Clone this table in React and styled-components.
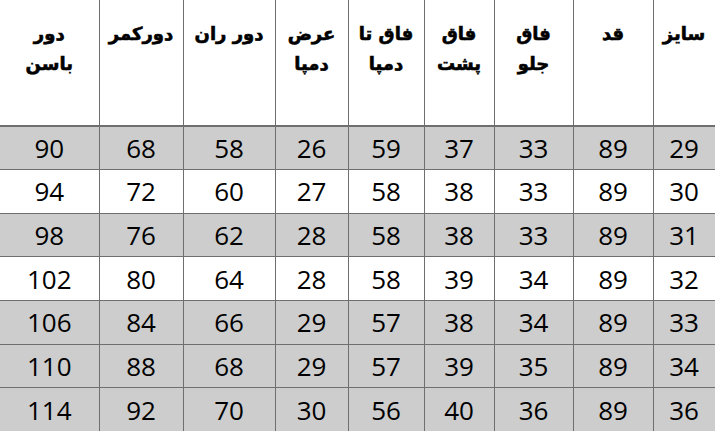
import React from "react";
import styled, { createGlobalStyle } from "styled-components";

const GlobalStyle = createGlobalStyle`
  html, body { margin: 0; padding: 0; background: #fff; }
  body { overflow: hidden; }
`;

// ستون‌ها از راست به چپ
const columns = [
  { title: ["سایز"], width: 62 },
  { title: ["قد"], width: 80 },
  { title: ["فاق", "جلو"], width: 79 },
  { title: ["فاق", "پشت"], width: 70 },
  { title: ["فاق تا", "دمپا"], width: 76 },
  { title: ["عرض", "دمپا"], width: 73 },
  { title: ["دور ران"], width: 92 },
  { title: ["دورکمر"], width: 84 },
  { title: ["دور", "باسن"], width: 99 },
];

const rows = [
  { shade: true, values: [29, 89, 33, 37, 59, 26, 58, 68, 90] },
  { shade: false, values: [30, 89, 33, 38, 58, 27, 60, 72, 94] },
  { shade: true, values: [31, 89, 33, 38, 58, 28, 62, 76, 98] },
  { shade: false, values: [32, 89, 34, 39, 58, 28, 64, 80, 102] },
  { shade: true, values: [33, 89, 34, 38, 57, 29, 66, 84, 106] },
  { shade: true, values: [34, 89, 35, 39, 57, 29, 68, 88, 110] },
  { shade: true, values: [36, 89, 36, 40, 56, 30, 70, 92, 114] },
];

export default function App() {
  return (
    <>
      <GlobalStyle />
      <Page>
        <SizeTable dir="rtl">
          <colgroup>
            {columns.map((c, i) => (
              <col key={i} style={{ width: c.width }} />
            ))}
          </colgroup>
          <thead>
            <tr>
              {columns.map((c, i) => (
                <HeadCell key={i}>
                  {c.title.map((line, j) => (
                    <HeadLine key={j}>{line}</HeadLine>
                  ))}
                </HeadCell>
              ))}
            </tr>
          </thead>
          <tbody>
            {rows.map((r, i) => (
              <Row key={i} $shade={r.shade}>
                {r.values.map((v, j) => (
                  <Cell key={j}>{v}</Cell>
                ))}
              </Row>
            ))}
          </tbody>
        </SizeTable>
      </Page>
    </>
  );
}

const Page = styled.div`
  width: 715px;
  height: 431px;
  overflow: hidden;
  background: #fff;
`;

const SizeTable = styled.table`
  width: 715px;
  table-layout: fixed;
  border-collapse: collapse;
  border-style: hidden;
  border-right: 1px solid #6f6f6f;
`;

const HeadCell = styled.th`
  height: 126px;
  padding: 19px 2px 0;
  box-sizing: border-box;
  vertical-align: top;
  text-align: center;
  font-family: "DejaVu Sans", "Noto Sans", sans-serif;
  font-weight: 700;
  font-size: 18px;
  line-height: 30px;
  color: #000;
  background: #fff;
  -webkit-text-stroke: 0.6px #000;
  border-left: 1px solid #6f6f6f;
  border-right: 1px solid #6f6f6f;
  border-bottom: 2px solid #6f6f6f;
`;

const HeadLine = styled.div`
  white-space: nowrap;
`;

const Row = styled.tr`
  height: 43.67px;
  background: ${({ $shade }) => ($shade ? "#cdcdcd" : "#fff")};
`;

const Cell = styled.td`
  padding: 0;
  text-align: center;
  vertical-align: middle;
  font-family: "Open Sans", "Liberation Sans", sans-serif;
  font-size: 26px;
  line-height: 30px;
  color: #000;
  border: 1px solid #6f6f6f;
`;
